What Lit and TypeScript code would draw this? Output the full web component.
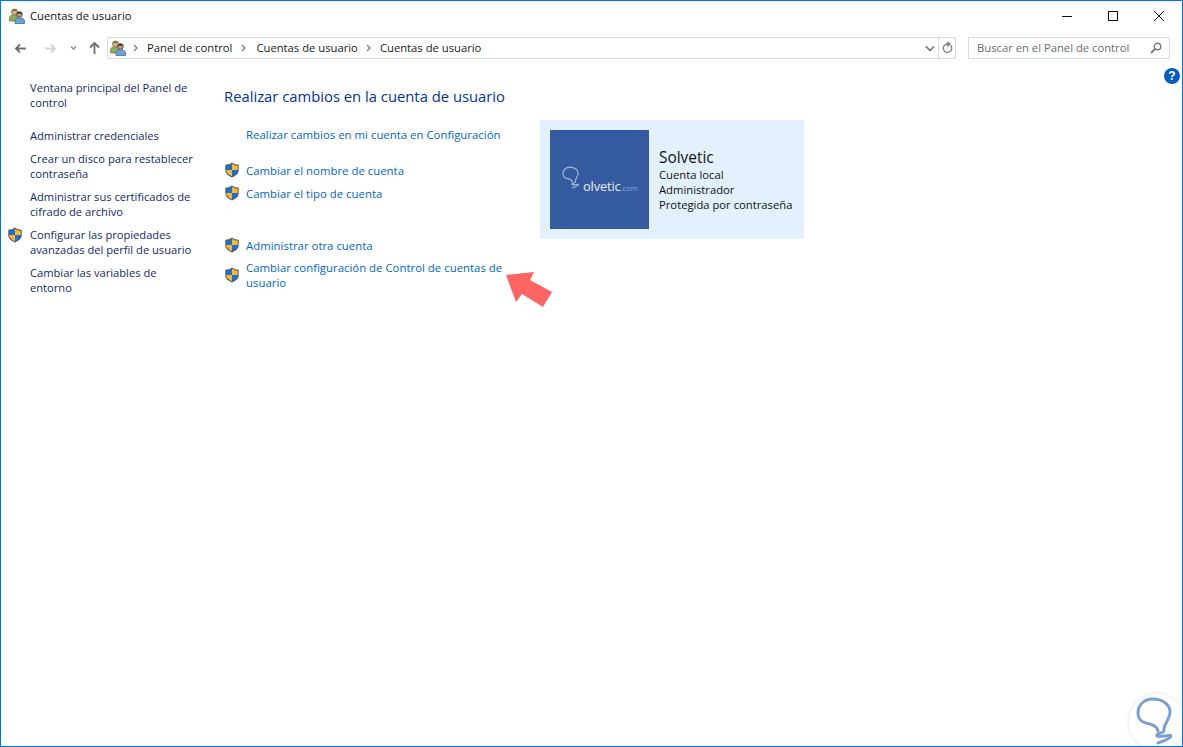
import { LitElement, html, css, svg } from "lit";
import { customElement } from "lit/decorators.js";

const shield = html`<svg class="shield" viewBox="0 0 16 16" width="16" height="16">
  <path d="M8 .6C6 2.2 4 2.7 1.3 2.8V8c0 3.500 2.800 5.900 6.700 7.400 3.900-1.500 6.700-3.900 6.700-7.400V2.800C12 2.700 10 2.200 8 .6z" fill="#4d5560"/>
  <path d="M8 1.800v6.200H2.200V3.700C4.400 3.600 6.200 3.100 8 1.800z" fill="#1f6fd0"/>
  <path d="M8 1.800c1.800 1.300 3.600 1.800 5.800 1.900V8H8z" fill="#f7b82b"/>
  <path d="M2.200 8H8v6.300C5 13 2.300 11.200 2.200 8z" fill="#f7b82b"/>
  <path d="M13.800 8H8v6.300c3-1.300 5.700-3.100 5.800-6.300z" fill="#1f6fd0"/>
</svg>`;

const users = html`<svg class="users" viewBox="0 0 16 16" width="16" height="16">
  <circle cx="5.500" cy="4" r="3" fill="#d9b48c" stroke="#7d6a45" stroke-width=".8"/>
  <path d="M2.800 3.500C3 1.800 4.200 1.100 5.500 1.100S8 1.800 8.200 3.500C7 2.700 4 2.700 2.800 3.500z" fill="#8a6d3f"/>
  <path d="M.5 13V9.500C.5 8 2.500 7 5.500 7s4 1 4 2.500V13z" fill="#8cae5f" stroke="#66803f" stroke-width=".8"/>
  <circle cx="10.500" cy="6.500" r="2.800" fill="#c49a74" stroke="#3d3a36" stroke-width=".8"/>
  <path d="M7.900 6C8 4.500 9.200 3.800 10.500 3.800S13 4.500 13.100 6C12 5.200 9 5.200 7.900 6z" fill="#35312d"/>
  <path d="M6 15.500V12.500c0-1.500 2-2.800 4.500-2.800s5 1.300 5 2.800v3z" fill="#6da3d3" stroke="#3f6f9f" stroke-width=".8"/>
</svg>`;

const arrowL = svg`<path d="M12 5.500H2M6 1.500l-4 4 4 4" fill="none" stroke="currentColor" stroke-width="1.800"/>`;
const arrowR = svg`<path d="M0 5.500h10M6 1.500l4 4-4 4" fill="none" stroke="currentColor" stroke-width="1.800"/>`;
const chev = html`<svg width="5" height="8" viewBox="0 0 5 8"><path d="M1 1l3 3-3 3" fill="none" stroke="currentColor" stroke-width="1.200"/></svg>`;

const bulb = (stroke: string, w: number) => svg`<path d="M26 33C25 26 32 22 32 14 32 6 24 1 15 1 6 1 0 7 0 15 0 23 6 25 12 26 16 27 19 29 20 33M26 33C24 36 18 35 19 38 20 40 33 36 33 38 33 41 22 44 20 45" fill="none" stroke="${stroke}" stroke-width="${w}" stroke-linecap="round" stroke-linejoin="round"/>`;

@customElement("app-root")
export class AppRoot extends LitElement {
  static styles = css`
    :host {
      display: block;
      width: 1183px;
      height: 747px;
      box-sizing: border-box;
      border: 1px solid #0078d7;
      background: #fff;
      position: relative;
      overflow: hidden;
      font-family: "Open Sans", "Noto Sans", sans-serif;
      font-size: 11.25px;
      line-height: 15px;
      color: #1a1a1a;
    }
    svg { display: block; flex: none; }
    .titlebar {
      display: flex;
      align-items: center;
      height: 30px;
      padding-left: 8px;
      gap: 5px;
    }
    .title { color: #111; padding-bottom: 2px; }
    .controls {
      margin-left: auto;
      display: flex;
      align-items: center;
      color: #111;
      padding-bottom: 1px;
    }
    .ctl { width: 46px; height: 29px; display: flex; align-items: center; justify-content: center; }
    .navrow {
      display: flex;
      align-items: center;
      height: 22px;
      margin-top: 6px;
      padding-left: 13px;
    }
    .nav { color: #6f6f6f; }
    .nav.off { color: #d4d4d4; }
    .nav.back { width: 31px; }
    .nav.fwd { width: 23px; }
    .nav.down { width: 20px; color: #8a8a8a; }
    .nav.up { width: 14px; }
    .address {
      flex: none;
      width: 849px;
      height: 22px;
      box-sizing: border-box;
      border: 1px solid #d9d9d9;
      margin-left: 5px;
      display: flex;
      align-items: center;
      padding-left: 2px;
    }
    .crumb { color: #1a1a1a; margin-left: 10px; padding-bottom: 1px; }
    .crumb.first { margin-left: 9px; }
    .crumb.third { margin-left: 9px; }
    .sep { margin-left: 9px; color: #7a7a7a; }
    .sep.first { margin-left: 7px; }
    .sep.third { margin-left: 8px; }
    .addr-right { margin-left: auto; display: flex; align-items: center; height: 100%; }
    .drop { width: 16px; display: flex; justify-content: center; color: #6a6a6a; }
    .refresh {
      width: 16px; height: 100%;
      border-left: 1px solid #d9d9d9;
      display: flex; align-items: center; justify-content: center;
      color: #808080;
    }
    .search {
      flex: none;
      margin-left: 12px;
      width: 202px;
      height: 22px;
      box-sizing: border-box;
      border: 1px solid #d9d9d9;
      display: flex;
      align-items: center;
      justify-content: space-between;
      padding: 0 7px 0 8px;
      color: #6d6d6d;
    }
    .search span { padding-bottom: 1px; }
    .body {
      display: flex;
      padding-top: 21px;
    }
    .side {
      flex: none;
      width: 223px;
      box-sizing: border-box;
      padding-left: 6px;
      display: flex;
      flex-direction: column;
      gap: 8px;
    }
    .side .item { display: flex; gap: 7px; width: 190px; }
    .side .slot { width: 16px; flex: none; }
    .side .item.first { margin-bottom: 10px; }
    .side .t { color: #12296b; font-size: 11.15px; }
    .main { flex: none; width: 316px; padding-top: 6px; font-size: 11.4px; }
    h1 {
      margin: 0 0 21px;
      font-size: 14.8px;
      line-height: 20px;
      font-weight: 400;
      color: #003399;
    }
    .links { display: flex; flex-direction: column; }
    .link { display: flex; gap: 6px; color: #0066cc; width: 292px; align-items: center; }
    .link .slot { width: 16px; flex: none; }
    .link.intro { margin-bottom: 20px; }
    .link.next { margin-top: 7px; margin-bottom: 36px; }
    .link.last { margin-top: 7px; }
    .card {
      flex: none;
      margin-top: 40px;
      width: 264px;
      height: 119px;
      box-sizing: border-box;
      padding: 10px;
      background: #e2f1fd;
      display: flex;
      gap: 10px;
      align-items: center;
    }
    .avatar {
      width: 99px;
      height: 99px;
      background: #345a9f;
      display: flex;
      align-items: center;
      flex: none;
      padding-left: 12px;
      box-sizing: border-box;
      color: #e4ebf5;
    }
    .avatar svg { margin-top: -5px; }
    .logo { font-size: 13px; margin-left: 3px; margin-top: 15px; letter-spacing: -.2px; white-space: nowrap; }
    .logo small { font-size: 7.500px; color: #8ea6cf; letter-spacing: 0; }
    .info { color: #111; }
    .name { font-size: 15.4px; line-height: 19px; margin-top: 1px; }
    .help {
      margin-left: auto;
      margin-right: 2px;
      margin-top: -12px;
      width: 16px; height: 16px;
      border-radius: 50%;
      background: #0a5cc0;
      color: #fff;
      font: 700 12px/16px "Liberation Sans", sans-serif;
      text-align: center;
      flex: none;
    }
    .arrow { position: absolute; left: 504px; top: 269px; }
    .mark {
      position: absolute;
      left: 1128px;
      top: 693px;
      width: 56px;
      height: 56px;
      border-radius: 50%;
      background: #fff;
      box-shadow: 0 0 4px #d5deee;
    }
    .mark svg { position: absolute; left: 7px; top: 3px; }
  `;

  render() {
    return html`
      <div class="titlebar">
        ${users}
        <span class="title">Cuentas de usuario</span>
        <div class="controls">
          <div class="ctl"><svg width="16" height="10" viewBox="0 0 16 10"><path d="M3 5.500h10" stroke="currentColor"/></svg></div>
          <div class="ctl"><svg width="12" height="12" viewBox="0 0 12 12"><rect x="1.500" y="1.500" width="9" height="9" fill="none" stroke="currentColor"/></svg></div>
          <div class="ctl"><svg width="12" height="12" viewBox="0 0 12 12"><path d="M1 1l10 10M11 1L1 11" stroke="currentColor" fill="none"/></svg></div>
        </div>
      </div>
      <div class="navrow">
        <svg class="nav back" viewBox="0 0 31 11" height="11">${arrowL}</svg>
        <svg class="nav off fwd" viewBox="0 0 23 11" height="11">${arrowR}</svg>
        <svg class="nav down" viewBox="0 0 20 11" height="11"><path d="M3 3.500l2.500 2.500L8 3.500" fill="none" stroke="currentColor" stroke-width="1.300"/></svg>
        <svg class="nav up" viewBox="0 0 14 14" height="14"><path d="M6.500 13V2M2 6.500l4.500-4.500L11 6.500" fill="none" stroke="currentColor" stroke-width="1.800"/></svg>
        <div class="address">
          ${users}
          <span class="sep first">${chev}</span>
          <span class="crumb first">Panel de control</span>
          <span class="sep">${chev}</span>
          <span class="crumb">Cuentas de usuario</span>
          <span class="sep third">${chev}</span>
          <span class="crumb third">Cuentas de usuario</span>
          <div class="addr-right">
            <div class="drop"><svg width="10" height="7" viewBox="0 0 10 7"><path d="M1 1.500l4 4 4-4" fill="none" stroke="currentColor" stroke-width="1.500"/></svg></div>
            <div class="refresh"><svg width="11" height="12" viewBox="0 0 11 12"><path d="M8.500 3.200a4.200 4.200 0 1 1-3-1.200H7M5.500 0v4L8 2z" fill="none" stroke="currentColor" stroke-width="1.300"/></svg></div>
          </div>
        </div>
        <div class="search">
          <span>Buscar en el Panel de control</span>
          <svg width="12" height="12" viewBox="0 0 12 12"><circle cx="7.500" cy="4.500" r="3.300" fill="none" stroke="#7a7a7a" stroke-width="1.400"/><path d="M5 7l-4 4" stroke="#7a7a7a" stroke-width="1.800"/></svg>
        </div>
      </div>
      <div class="body">
        <nav class="side">
          <div class="item first"><div class="slot"></div><span class="t">Ventana principal del Panel de control</span></div>
          <div class="item"><div class="slot"></div><span class="t">Administrar credenciales</span></div>
          <div class="item"><div class="slot"></div><span class="t">Crear un disco para restablecer contraseña</span></div>
          <div class="item"><div class="slot"></div><span class="t">Administrar sus certificados de cifrado de archivo</span></div>
          <div class="item"><div class="slot">${shield}</div><span class="t">Configurar las propiedades avanzadas del perfil de usuario</span></div>
          <div class="item"><div class="slot"></div><span class="t">Cambiar las variables de entorno</span></div>
        </nav>
        <main class="main">
          <h1>Realizar cambios en la cuenta de usuario</h1>
          <div class="links">
            <div class="link intro"><div class="slot"></div><span>Realizar cambios en mi cuenta en Configuración</span></div>
            <div class="link"><div class="slot">${shield}</div><span>Cambiar el nombre de cuenta</span></div>
            <div class="link next"><div class="slot">${shield}</div><span>Cambiar el tipo de cuenta</span></div>
            <div class="link"><div class="slot">${shield}</div><span>Administrar otra cuenta</span></div>
            <div class="link last"><div class="slot">${shield}</div><span>Cambiar configuración de Control de cuentas de usuario</span></div>
          </div>
        </main>
        <section class="card">
          <div class="avatar">
            <svg width="18" height="25" viewBox="-2 -1 38 48">${bulb("#a5b6d6", 2.5)}</svg>
            <span class="logo">olvetic<small>.com</small></span>
          </div>
          <div class="info">
            <div class="name">Solvetic</div>
            <div>Cuenta local</div>
            <div>Administrador</div>
            <div>Protegida por contraseña</div>
          </div>
        </section>
        <div class="help">?</div>
      </div>
      <svg class="arrow" width="50" height="40" viewBox="505 270 50 40"><polygon points="506,275 534,272 530,280 552,292 543,307 522,294 516,302" fill="#fd6464"/></svg>
      <div class="mark"><svg width="38" height="48" viewBox="-2 -1 38 48">${bulb("#7ba0d0", 3)}</svg></div>
    `;
  }
}
